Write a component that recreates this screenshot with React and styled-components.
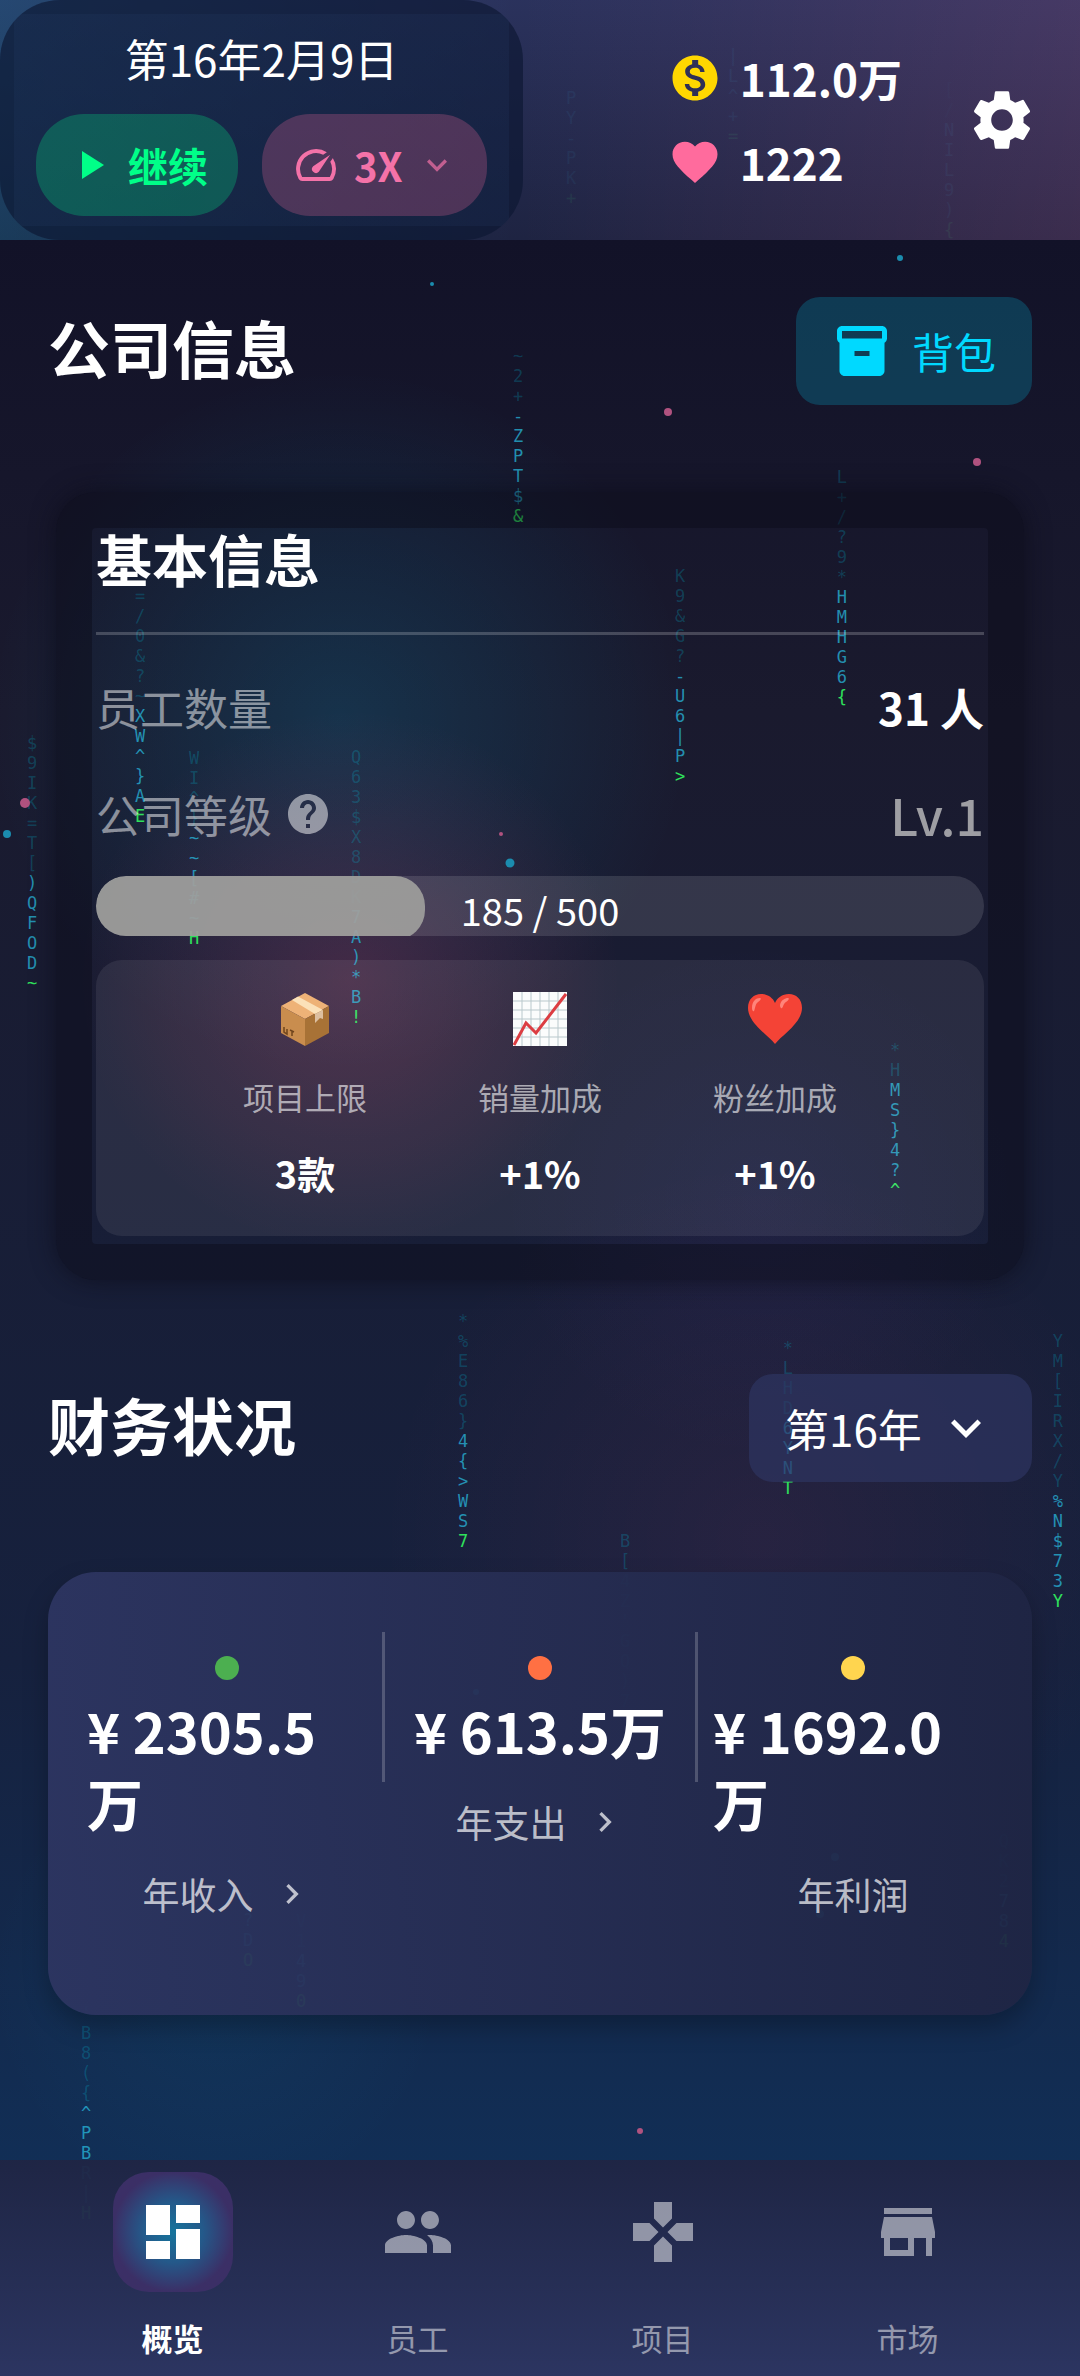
import React from "react";
import styled, { createGlobalStyle } from "styled-components";
import {
  MdChevronRight,
  MdDashboard,
  MdExpandMore,
  MdFavorite,
  MdGames,
  MdHelp,
  MdInventory2,
  MdMonetizationOn,
  MdPeople,
  MdPlayArrow,
  MdSettings,
  MdSpeed,
  MdStore,
} from "react-icons/md";

const GlobalStyle = createGlobalStyle`
  *, *::before, *::after { box-sizing: border-box; }
  body { margin: 0; background: #0f0f23; }
  button, select { font: inherit; color: inherit; border: 0; background: none; margin: 0; padding: 0; cursor: pointer; }
  svg { display: block; flex: none; }
  h1, h2, p, dl, dd, dt { margin: 0; font: inherit; }
`;

const Page = styled.div`
  position: relative;
  min-height: 100vh;
  display: flex;
  flex-direction: column;
  overflow: hidden;
  color: #fff;
  font-family: "Noto Sans CJK SC", "Noto Sans", sans-serif;
  font-size: 44px;
  line-height: 60px;
  background:
    radial-gradient(circle at 350px 980px, rgba(255, 70, 120, 0.19), transparent 270px),
    radial-gradient(circle at 340px 720px, rgba(0, 200, 255, 0.14), transparent 350px),
    radial-gradient(circle at 760px 1540px, rgba(255, 70, 130, 0.07), transparent 380px),
    radial-gradient(circle at 760px 1200px, rgba(120, 80, 255, 0.05), transparent 260px),
    radial-gradient(circle at 216px 1980px, rgba(0, 217, 255, 0.05), transparent 230px),
    linear-gradient(180deg, #0e0e25 0%, #1a1a2e 30%, #16213e 70%, #0f3460 100%);
`;

/* Backdrop: falling code and drifting particles */
const Backdrop = styled.div`
  position: absolute;
  inset: 0;
  pointer-events: none;
`;

const RainColumn = styled.div`
  position: absolute;
  left: ${(p) => (p.$x / 1080) * 100}%;
  top: ${(p) => p.$y - 10}px;
  width: 20px;
  margin-left: -10px;
  display: grid;
  grid-auto-rows: 20px;
  justify-items: center;
  font: 17px/20px "DejaVu Sans Mono", monospace;
`;

const tones = {
  dim: "rgba(0, 190, 220, 0.24)",
  lit: "rgba(40, 190, 225, 0.72)",
  head: "#2fe05c",
};

const Glyph = styled.span`
  color: ${(p) => tones[p.$tone]};
`;

const Particle = styled.i`
  position: absolute;
  left: ${(p) => (p.$x / 1080) * 100}%;
  top: ${(p) => p.$y}px;
  width: ${(p) => p.$size}px;
  height: ${(p) => p.$size}px;
  border-radius: 50%;
  transform: translate(-50%, -50%);
  background: ${(p) => (p.$pink ? "#b0527f" : "#1b8cae")};
`;

const TopBar = styled.header`
  position: relative;
  display: flex;
  align-items: center;
  justify-content: space-between;
  padding-right: 42px;
  background:
    linear-gradient(90deg, rgba(0, 217, 255, 0.13), transparent 48%, rgba(255, 107, 157, 0.13)),
    linear-gradient(180deg, rgba(45, 53, 97, 0.92), rgba(31, 37, 68, 0.92));
`;

const ClockPanel = styled.div`
  display: flex;
  flex-direction: column;
  align-items: center;
  gap: 26px;
  padding: 28px 36px 24px;
  border-radius: 60px;
  background:
    linear-gradient(rgba(50, 80, 130, 0.12), rgba(50, 80, 130, 0.12)) center / calc(100% - 28px) calc(100% - 28px)
      no-repeat,
    rgba(12, 23, 50, 0.66);
`;

const ClockControls = styled.div`
  display: flex;
  gap: 24px;
  font-size: 40px;
  font-weight: 700;
`;

const PauseButton = styled.button`
  display: flex;
  align-items: center;
  gap: 14px;
  height: 102px;
  padding: 0 30px;
  border-radius: 48px;
  color: #00ff88;
  background: rgba(0, 255, 136, 0.24);
  font-weight: 700;
`;

/* A native select with icons laid over its padding */
const SelectShell = styled.label`
  display: grid;
  align-items: center;
  border-radius: ${(p) => p.$radius}px;
  background: ${(p) => p.$fill};
  color: ${(p) => p.$color};
  > * { grid-area: 1 / 1; }
  > svg { pointer-events: none; margin: 0 ${(p) => p.$inset}px; }
  > svg:last-child { justify-self: end; }
`;

const BareSelect = styled.select`
  appearance: none;
  height: ${(p) => p.$height}px;
  padding: ${(p) => p.$pad};
  outline: 0;
  option { color: #111; }
`;

const TopBarEnd = styled.div`
  display: flex;
  align-items: center;
  gap: 64px;
`;

const Resources = styled.div`
  display: grid;
  gap: 24px;
  font-weight: 700;
`;

const Resource = styled.div`
  display: flex;
  align-items: center;
  gap: 18px;
`;

const IconButton = styled.button`
  color: #fff;
`;

const Content = styled.main`
  position: relative;
  flex: 1;
  padding: 57px 48px 144px;
`;

const SectionHead = styled.div`
  display: flex;
  align-items: center;
  justify-content: space-between;
  height: 108px;
`;

const SectionTitle = styled.h1`
  padding-bottom: 8px;
  font-size: 62px;
  font-weight: 700;
  line-height: 84px;
`;

const BagButton = styled.button`
  display: flex;
  align-items: center;
  gap: 20px;
  height: 108px;
  padding: 0 36px;
  border-radius: 24px;
  color: #00d9ff;
  background: rgba(0, 217, 255, 0.2);
  font-size: 42px;
`;

const InfoCard = styled.section`
  margin: 87px 8px 94px;
  padding: 0 4px 8px;
  border: 36px solid rgba(12, 12, 24, 0.45);
  border-radius: 40px;
  box-shadow: 0 0 24px rgba(12, 12, 24, 0.7);
`;

const CardTitle = styled.h2`
  padding-bottom: 44px;
  border-bottom: 3px solid rgba(255, 255, 255, 0.2);
  margin-bottom: 42px;
  font-size: 56px;
  font-weight: 700;
  line-height: 60px;
`;

const InfoRow = styled.div`
  display: flex;
  align-items: center;
  justify-content: space-between;
  height: 60px;
  & + & { margin-top: 47px; }
`;

const RowLabel = styled.span`
  display: flex;
  align-items: center;
  gap: 12px;
  color: rgba(255, 255, 255, 0.5);
`;

const RowValue = styled.strong`
  font-weight: 700;
`;

const LevelValue = styled.span`
  font-size: 50px;
  font-weight: 500;
  color: #9e9ea3;
`;

const Meter = styled.div`
  display: grid;
  height: 60px;
  margin: 32px 0 24px;
  border-radius: 30px;
  overflow: hidden;
  background: rgba(255, 255, 255, 0.12);
  > * { grid-area: 1 / 1; }
`;

const MeterFill = styled.div`
  border-radius: 30px;
  background: rgba(158, 158, 156, 0.93);
`;

const MeterText = styled.span`
  padding-top: 4px;
  text-align: center;
  font-size: 38px;
`;

const Bonuses = styled.dl`
  display: flex;
  justify-content: space-evenly;
  padding: 32px 36px 38px;
  border-radius: 26px;
  background: rgba(255, 255, 255, 0.075);
`;

const Bonus = styled.div`
  display: flex;
  flex-direction: column;
  align-items: center;
  gap: 31px;
`;

const BonusName = styled.dt`
  font-size: 31px;
  line-height: 40px;
  color: rgba(255, 255, 255, 0.6);
`;

const BonusValue = styled.dd`
  font-size: 38px;
  font-weight: 700;
  line-height: 50px;
`;

const FinanceCard = styled.section`
  display: grid;
  grid-template-columns: 1fr 3px 1fr 3px 1fr;
  margin-top: 90px;
  padding: 60px 24px 73px;
  border-radius: 48px;
  background: linear-gradient(90deg, rgba(45, 53, 97, 0.95), rgba(31, 37, 68, 0.95));
  box-shadow: 0 12px 24px rgba(0, 0, 0, 0.25);
`;

const Divider = styled.div`
  height: 150px;
  background: rgba(255, 255, 255, 0.2);
`;

const Figure = styled.div`
  display: flex;
  flex-direction: column;
  align-items: center;
  padding: 24px 0;
`;

const Dot = styled.span`
  width: 24px;
  height: 24px;
  border-radius: 50%;
  background: ${(p) => p.$color};
`;

const Amount = styled.strong`
  max-width: 5em;
  margin: 14px 0 32px;
  font-size: 56px;
  font-weight: 700;
  line-height: 72px;
`;

const FigureLink = styled.a`
  display: flex;
  align-items: center;
  gap: 18px;
  height: 48px;
  font-size: 37px;
  color: rgba(255, 255, 255, 0.7);
  text-decoration: none;
`;

const FigureLabel = styled(FigureLink).attrs({ as: "span" })``;

const TabBar = styled.nav`
  position: relative;
  display: grid;
  grid-template-columns: repeat(4, 1fr);
  padding: 12px 50px;
  background: linear-gradient(180deg, rgba(31, 37, 68, 0.96), rgba(45, 53, 97, 0.96));
`;

const Tab = styled.button`
  display: flex;
  flex-direction: column;
  align-items: center;
  gap: 24px;
  padding-bottom: 4px;
  font-size: 31px;
  font-weight: ${(p) => (p.$active ? 700 : 400)};
  line-height: 44px;
  color: ${(p) => (p.$active ? "#fff" : "rgba(255, 255, 255, 0.5)")};
`;

const TabIcon = styled.span`
  display: grid;
  place-items: center;
  width: 120px;
  height: 120px;
  border-radius: 36px;
  background: ${(p) =>
    p.$active ? "radial-gradient(circle closest-side, #16749c 0%, #24598a 50%, #3b2f66 100%)" : "none"};
`;

const rain = [
  { x: 518, y: 356, text: "~2+-ZPT$&", dim: 3 },
  { x: 842, y: 477, text: "L+/?9*HMHG6{", dim: 6 },
  { x: 680, y: 576, text: "K9&G?-U6|P>", dim: 5 },
  { x: 140, y: 596, text: "=/0&?~XW^}AE", dim: 6 },
  { x: 32, y: 743, text: "$9IK=T[)QFOD~", dim: 7 },
  { x: 194, y: 758, text: "WI^}~~[#~H", dim: 4 },
  { x: 356, y: 757, text: "Q63$X8DK7A)*B!", dim: 8 },
  { x: 895, y: 1050, text: "*HMS}4?^", dim: 2 },
  { x: 463, y: 1321, text: "*%E86}4{>WS7", dim: 6 },
  { x: 788, y: 1348, text: "*LHD6YNT", dim: 4 },
  { x: 1058, y: 1341, text: "YM[IRX/Y%N$73Y", dim: 8 },
  { x: 625, y: 1541, text: "B[4Z'GQ)7", dim: 9 },
  { x: 86, y: 2013, text: "'B8({^PBR|H", dim: 5 },
  { x: 571, y: 98, text: "PY-PK+", dim: 0 },
  { x: 733, y: 56, text: "|L^+=", dim: 0 },
  { x: 949, y: 90, text: "[/NIL9){", dim: 2 },
  { x: 1004, y: 1841, text: "QK2784", dim: 3 },
  { x: 248, y: 1900, text: "I?DO", dim: 1 },
  { x: 301, y: 1921, text: "V1490", dim: 2 },
];

const particles = [
  { x: 900, y: 258, size: 6 },
  { x: 432, y: 284, size: 4 },
  { x: 668, y: 412, size: 8, pink: true },
  { x: 977, y: 462, size: 8, pink: true },
  { x: 25, y: 803, size: 10, pink: true },
  { x: 7, y: 834, size: 8 },
  { x: 501, y: 834, size: 4, pink: true },
  { x: 510, y: 863, size: 9 },
  { x: 640, y: 2131, size: 6, pink: true },
  { x: 476, y: 1692, size: 6 },
  { x: 835, y: 1857, size: 8 },
  { x: 820, y: 1914, size: 8 },
];

const toneAt = (column, i) => {
  if (i === column.text.length - 1 && column.dim < column.text.length) return "head";
  return i < column.dim ? "dim" : "lit";
};

const PackageIcon = () => (
  <svg width="54" height="54" viewBox="0 0 54 54" aria-hidden="true">
    <path d="M27 1 51 14 27 27 3 14Z" fill="#eeb277" />
    <path d="M3 14 27 27V54L3 41Z" fill="#c98d4e" />
    <path d="M51 14 27 27V54L51 41Z" fill="#a87236" />
    <path d="M14 8 20 4.500 45 18 37 22Z" fill="#fbe1b9" />
    <path d="M45 18v9l-3-1-5 5v-9Z" fill="#ddbfa0" />
    <path d="M6 35v5l3 2v-5M12 38l4 2M14 39v5" fill="none" stroke="#70451d" strokeWidth="1.500" />
  </svg>
);

const ChartIcon = () => (
  <svg width="54" height="54" viewBox="0 0 54 54" aria-hidden="true">
    <path d="M0 0H54V54H0Z" fill="#fbfcfc" />
    <path
      d="M9 0V54M18 0V54M27 0V54M36 0V54M45 0V54M0 9H54M0 18H54M0 27H54M0 36H54M0 45H54"
      stroke="#b9c8cc"
      strokeWidth="1"
    />
    <path d="M1 53 13 31 23 41 53 2" fill="none" stroke="#dc3d42" strokeWidth="3" />
  </svg>
);

const HeartIcon = () => (
  <svg width="54" height="54" viewBox="0 0 54 54" aria-hidden="true">
    <path
      d="M27 52C20 43 0 31 0 16 0 7 6 2 13 2c7 0 12 4 14 9 2-5 7-9 14-9 7 0 13 5 13 14 0 15-20 27-27 36Z"
      fill="#f44336"
    />
    <path d="M4 16C4 9 8 6 12 6c2 0 0 3-2 4-3 2-3 8-4 9-1 1-2-1-2-3Z" fill="#ff847a" />
    <path d="M32 13c1-5 5-7 8-7 2 0 0 3-2 4-3 2-3 6-4 6-1 1-2-1-2-3Z" fill="#ff847a" />
  </svg>
);

const bonuses = [
  { name: "项目上限", value: "3款", Icon: PackageIcon },
  { name: "销量加成", value: "+1%", Icon: ChartIcon },
  { name: "粉丝加成", value: "+1%", Icon: HeartIcon },
];

const tabs = [
  { name: "概览", Icon: MdDashboard, active: true },
  { name: "员工", Icon: MdPeople },
  { name: "项目", Icon: MdGames },
  { name: "市场", Icon: MdStore },
];

const experience = { current: 185, needed: 500 };

export default function App() {
  return (
    <Page>
      <GlobalStyle />
      <Backdrop aria-hidden="true">
        {rain.map((column) => (
          <RainColumn key={`${column.x}-${column.y}`} $x={column.x} $y={column.y}>
            {[...column.text].map((char, i) => (
              <Glyph key={i} $tone={toneAt(column, i)}>
                {char}
              </Glyph>
            ))}
          </RainColumn>
        ))}
        {particles.map((dot) => (
          <Particle key={`${dot.x}-${dot.y}`} $x={dot.x} $y={dot.y} $size={dot.size} $pink={dot.pink} />
        ))}
      </Backdrop>

      <TopBar>
        <ClockPanel>
          <span>第16年2月9日</span>
          <ClockControls>
            <PauseButton type="button">
              <MdPlayArrow size={48} />
              继续
            </PauseButton>
            <SelectShell $radius={48} $fill="rgba(255, 107, 157, 0.24)" $color="#f472a8" $inset={30}>
              <BareSelect $height={102} $pad="0 84px 0 92px" aria-label="游戏速度" defaultValue="3X">
                <option>3X</option>
              </BareSelect>
              <MdSpeed size={48} />
              <MdExpandMore size={40} opacity={0.7} />
            </SelectShell>
          </ClockControls>
        </ClockPanel>
        <TopBarEnd>
          <Resources>
            <Resource>
              <MdMonetizationOn size={54} color="#ffd700" />
              112.0万
            </Resource>
            <Resource>
              <MdFavorite size={54} color="#ff6b9d" />
              1222
            </Resource>
          </Resources>
          <IconButton type="button" aria-label="设置">
            <MdSettings size={72} />
          </IconButton>
        </TopBarEnd>
      </TopBar>

      <Content>
        <SectionHead>
          <SectionTitle>公司信息</SectionTitle>
          <BagButton type="button">
            <MdInventory2 size={60} />
            背包
          </BagButton>
        </SectionHead>

        <InfoCard>
          <CardTitle>基本信息</CardTitle>
          <InfoRow>
            <RowLabel>员工数量</RowLabel>
            <RowValue>31 人</RowValue>
          </InfoRow>
          <InfoRow>
            <RowLabel>
              公司等级
              <MdHelp size={48} />
            </RowLabel>
            <LevelValue>Lv.1</LevelValue>
          </InfoRow>
          <Meter
            role="progressbar"
            aria-label="公司等级"
            aria-valuenow={experience.current}
            aria-valuemax={experience.needed}
          >
            <MeterFill style={{ width: `${(experience.current / experience.needed) * 100}%` }} />
            <MeterText>
              {experience.current} / {experience.needed}
            </MeterText>
          </Meter>
          <Bonuses>
            {bonuses.map(({ name, value, Icon }) => (
              <Bonus key={name}>
                <Icon />
                <BonusName>{name}</BonusName>
                <BonusValue>{value}</BonusValue>
              </Bonus>
            ))}
          </Bonuses>
        </InfoCard>

        <SectionHead>
          <SectionTitle>财务状况</SectionTitle>
          <SelectShell $radius={24} $fill="rgba(45, 53, 97, 0.7)" $color="#fff" $inset={36}>
            <BareSelect $height={108} $pad="0 110px 0 36px" aria-label="年份" defaultValue="第16年">
              <option>第16年</option>
            </BareSelect>
            <MdExpandMore size={60} />
          </SelectShell>
        </SectionHead>

        <FinanceCard>
          <Figure>
            <Dot $color="#4caf50" />
            <Amount>¥ 2305.5万</Amount>
            <FigureLink href="#income">
              年收入
              <MdChevronRight size={40} />
            </FigureLink>
          </Figure>
          <Divider />
          <Figure>
            <Dot $color="#ff7043" />
            <Amount>¥ 613.5万</Amount>
            <FigureLink href="#expense">
              年支出
              <MdChevronRight size={40} />
            </FigureLink>
          </Figure>
          <Divider />
          <Figure>
            <Dot $color="#ffd54f" />
            <Amount>¥ 1692.0万</Amount>
            <FigureLabel>年利润</FigureLabel>
          </Figure>
        </FinanceCard>
      </Content>

      <TabBar>
        {tabs.map(({ name, Icon, active }) => (
          <Tab key={name} type="button" $active={active} aria-current={active ? "page" : undefined}>
            <TabIcon $active={active}>
              <Icon size={72} />
            </TabIcon>
            {name}
          </Tab>
        ))}
      </TabBar>
    </Page>
  );
}
